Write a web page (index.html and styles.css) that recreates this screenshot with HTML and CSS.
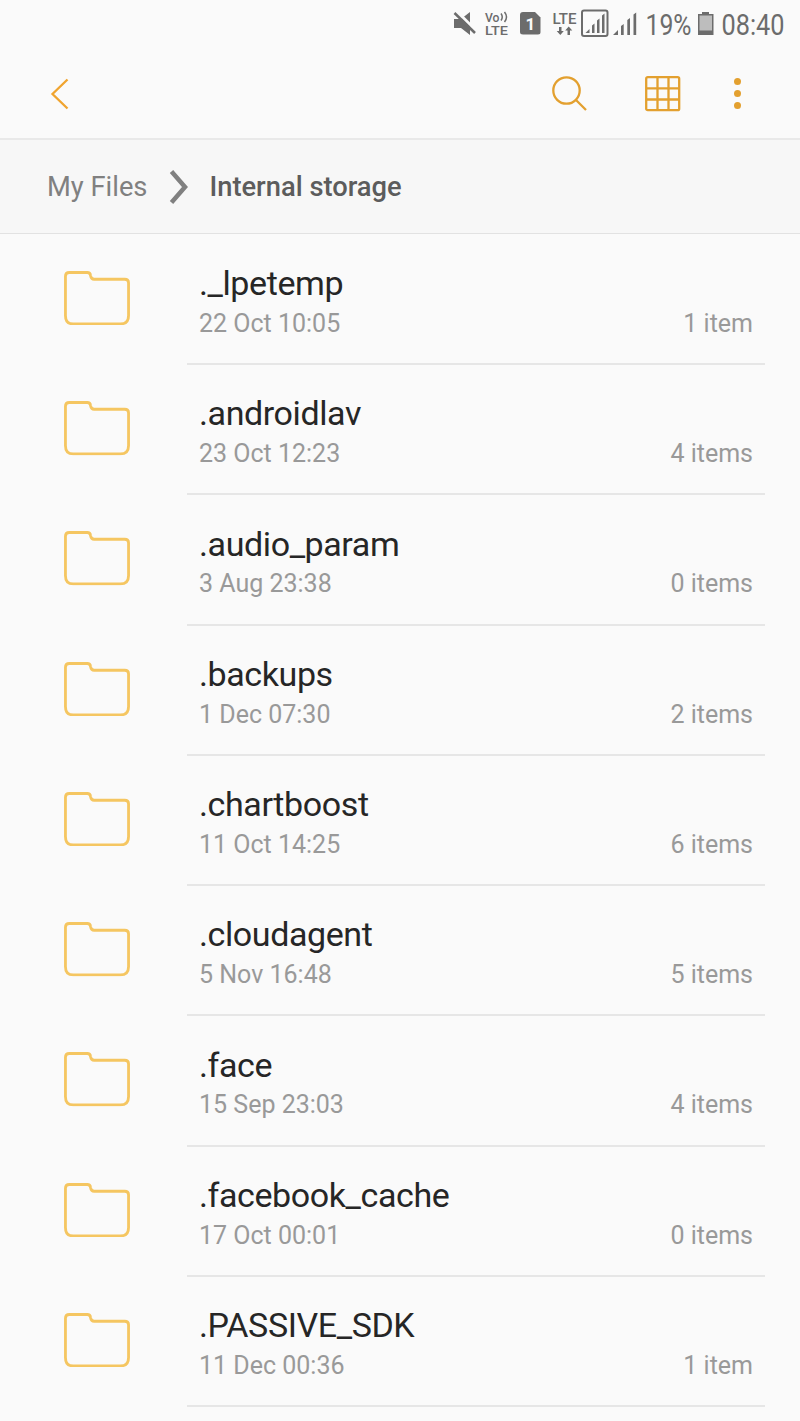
FILE: index.html
```html
<!DOCTYPE html>
<html lang="en">
<head>
    <meta charset="UTF-8">
    <meta name="viewport" content="width=device-width, initial-scale=1.0">
    <title>My Files</title>
    <link rel="stylesheet" href="styles.css">
</head>
<body>
    <svg class="sprite" width="0" height="0">
        <symbol id="folder" viewBox="0 0 68 56">
            <path d="M5.5 1.5H24Q27 1.5 27.300 4.500Q28 8.500 31 8.500H62.500Q66.500 8.500 66.500 12V46Q66.500 54.500 58 54.500H9.500Q1.500 54.500 1.500 46V5.500Q1.500 1.500 5.500 1.500Z" fill="none" stroke="#f5c661" stroke-width="2.900"/>
        </symbol>
    </svg>

    <div class="status-bar">
        <svg width="800" height="48" viewBox="0 0 800 48">
            <!-- muted speaker -->
            <path d="M454 19h7l9-7v23l-9-7h-7z"/>
            <path class="gap" d="M455 9.500l22 22"/>
            <path class="slash" d="M454.500 13l20.500 20"/>
            <!-- VoLTE -->
            <text class="volte" x="485" y="21.500" textLength="14.500" lengthAdjust="spacingAndGlyphs">Vo</text>
            <path class="wave" d="M501 13.500q2.500 3.500 0 7M504.500 12q4 5 0 10"/>
            <text class="volte" x="485" y="34.800" textLength="23" lengthAdjust="spacingAndGlyphs">LTE</text>
            <!-- SIM 1 -->
            <path d="M523 12h12l5.500 5.500V32q0 2.500-2.500 2.500h-15q-3 0-3-2.500V15q0-3 3-3z"/>
            <text class="sim" x="525.500" y="29.500">1</text>
            <!-- LTE data -->
            <text class="lte" x="552.500" y="23.500" textLength="24" lengthAdjust="spacingAndGlyphs">LTE</text>
            <path d="M559 27h2.500v4h2.300l-3.500 4-3.600-4h2.300zM567.500 35h2.500v-4.500h2.300l-3.600-4-3.500 4h2.300z"/>
            <!-- signal strength -->
            <rect class="frame" x="582" y="10.500" width="25.500" height="25.500" rx="2"/>
            <path d="M585.500 33l4-4v4zM592 25.500l2.500-2V33H592zM597 20.500l2.500-2V33H597zM602 15.500l2.500-2V33H602z"/>
            <path d="M613 35l5-5v5zM621 26l2.700-2v11H621zM627.300 20l2.700-2v17h-2.700zM633.500 14.500l2.700-2V35h-2.700z"/>
            <text class="clock" x="645.500" y="34.500" textLength="46" lengthAdjust="spacingAndGlyphs">19%</text>
            <!-- battery -->
            <path d="M698 14h4v-2h7v2h4.500v21H698z"/>
            <path class="empty" d="M699.500 15.500h12.500v15h-12.500z"/>
            <text class="clock" x="721.500" y="34.500" textLength="63" lengthAdjust="spacingAndGlyphs">08:40</text>
        </svg>
    </div>

    <div class="toolbar">
        <svg class="back" width="20" height="34" viewBox="0 0 20 34">
            <path d="M17.500 2.500L2.500 17L17.500 31.500"/>
        </svg>
        <svg class="search" width="38" height="38" viewBox="0 0 38 38">
            <circle cx="15.500" cy="15.500" r="13.200"/>
            <path d="M25 25L35 35"/>
        </svg>
        <svg class="grid" width="36" height="36" viewBox="0 0 36 36">
            <rect x="1.200" y="1.200" width="33" height="33" rx="1.500"/>
            <path d="M12.500 1V34M23.500 1V34M1 12.300H34M1 23.500H34"/>
        </svg>
        <div class="more"><span></span><span></span><span></span></div>
    </div>

    <div class="breadcrumb">
        <span class="parent">My Files</span>
        <svg width="20" height="36" viewBox="0 0 20 36">
            <path d="M2.500 2.500L16 18L2.500 33.500"/>
        </svg>
        <span class="current">Internal storage</span>
    </div>

    <div class="file-list">
        <div class="file">
            <svg class="folder"><use href="#folder"/></svg>
            <div class="info">
                <div class="name">._lpetemp</div>
                <div class="details"><span>22 Oct 10:05</span><span>1 item</span></div>
            </div>
        </div>
        <div class="file">
            <svg class="folder"><use href="#folder"/></svg>
            <div class="info">
                <div class="name">.androidlav</div>
                <div class="details"><span>23 Oct 12:23</span><span>4 items</span></div>
            </div>
        </div>
        <div class="file">
            <svg class="folder"><use href="#folder"/></svg>
            <div class="info">
                <div class="name">.audio_param</div>
                <div class="details"><span>3 Aug 23:38</span><span>0 items</span></div>
            </div>
        </div>
        <div class="file">
            <svg class="folder"><use href="#folder"/></svg>
            <div class="info">
                <div class="name">.backups</div>
                <div class="details"><span>1 Dec 07:30</span><span>2 items</span></div>
            </div>
        </div>
        <div class="file">
            <svg class="folder"><use href="#folder"/></svg>
            <div class="info">
                <div class="name">.chartboost</div>
                <div class="details"><span>11 Oct 14:25</span><span>6 items</span></div>
            </div>
        </div>
        <div class="file">
            <svg class="folder"><use href="#folder"/></svg>
            <div class="info">
                <div class="name">.cloudagent</div>
                <div class="details"><span>5 Nov 16:48</span><span>5 items</span></div>
            </div>
        </div>
        <div class="file">
            <svg class="folder"><use href="#folder"/></svg>
            <div class="info">
                <div class="name">.face</div>
                <div class="details"><span>15 Sep 23:03</span><span>4 items</span></div>
            </div>
        </div>
        <div class="file">
            <svg class="folder"><use href="#folder"/></svg>
            <div class="info">
                <div class="name">.facebook_cache</div>
                <div class="details"><span>17 Oct 00:01</span><span>0 items</span></div>
            </div>
        </div>
        <div class="file">
            <svg class="folder"><use href="#folder"/></svg>
            <div class="info">
                <div class="name">.PASSIVE_SDK</div>
                <div class="details"><span>11 Dec 00:36</span><span>1 item</span></div>
            </div>
        </div>
    </div>
</body>
</html>
```
FILE: styles.css
```css
* {
    box-sizing: border-box;
}

body {
    margin: 0;
    width: 800px;
    height: 1421px;
    overflow: hidden;
    background-color: #fafafa;
    font-family: Roboto, sans-serif;
}

svg {
    display: block;
    flex: none;
}

.sprite {
    height: 0;
}

.status-bar {
    height: 48px;
}

.status-bar svg {
    fill: #6c6c6c;
}

.status-bar .gap {
    stroke: #fafafa;
    stroke-width: 3;
}

.status-bar .slash {
    stroke: #6c6c6c;
    stroke-width: 2.5;
}

.status-bar .wave {
    fill: none;
    stroke: #6c6c6c;
    stroke-width: 1.5;
}

.status-bar .frame {
    fill: none;
    stroke: #6c6c6c;
    stroke-width: 2;
}

.status-bar .empty {
    fill: #bdbdbd;
}

.volte {
    font-size: 13px;
    font-weight: 500;
}

.lte {
    font-size: 14.5px;
    font-weight: 500;
}

.sim {
    font-size: 17px;
    font-weight: 700;
    fill: #fafafa;
}

.clock {
    font-size: 29px;
}

.toolbar {
    display: flex;
    align-items: center;
    height: 92px;
    padding: 1px 59px 0 50px;
    border-bottom: 2px solid #e9e9e9;
}

.toolbar svg {
    fill: none;
    stroke: #e3a02f;
    stroke-width: 2.3;
}

.toolbar .back {
    stroke: #f0a42f;
}

.search {
    margin-left: auto;
}

.grid {
    margin-left: 56px;
}

.more {
    display: flex;
    flex-direction: column;
    gap: 4.3px;
    margin-left: 52.5px;
}

.more span {
    width: 7.5px;
    height: 7.5px;
    border-radius: 50%;
    background-color: #e3a02f;
}

.breadcrumb {
    display: flex;
    align-items: center;
    height: 94px;
    padding: 1px 0 0 47px;
    background-color: #f7f7f7;
    border-bottom: 1px solid #e2e2e2;
    font-size: 27.3px;
    color: #808080;
}

.breadcrumb svg {
    margin: 0 20px 0 22px;
    fill: none;
    stroke: #808080;
    stroke-width: 4.5;
}

.current {
    font-weight: 500;
    color: #5c5c5c;
}

.file-list {
    padding-top: 0.75px;
}

.file {
    display: flex;
    height: 130.25px;
}

.folder {
    width: 66px;
    height: 54.4px;
    margin: 36.2px 57px 0 64px;
}

.info {
    width: 578px;
    padding: 28.25px 12px 0;
    border-bottom: 2px solid #e6e6e6;
}

.name {
    font-size: 34px;
    line-height: 40px;
    letter-spacing: -0.4px;
    color: #262626;
}

.details {
    display: flex;
    justify-content: space-between;
    margin-top: 1.75px;
    font-size: 25px;
    line-height: 38px;
    color: #999999;
}
```
